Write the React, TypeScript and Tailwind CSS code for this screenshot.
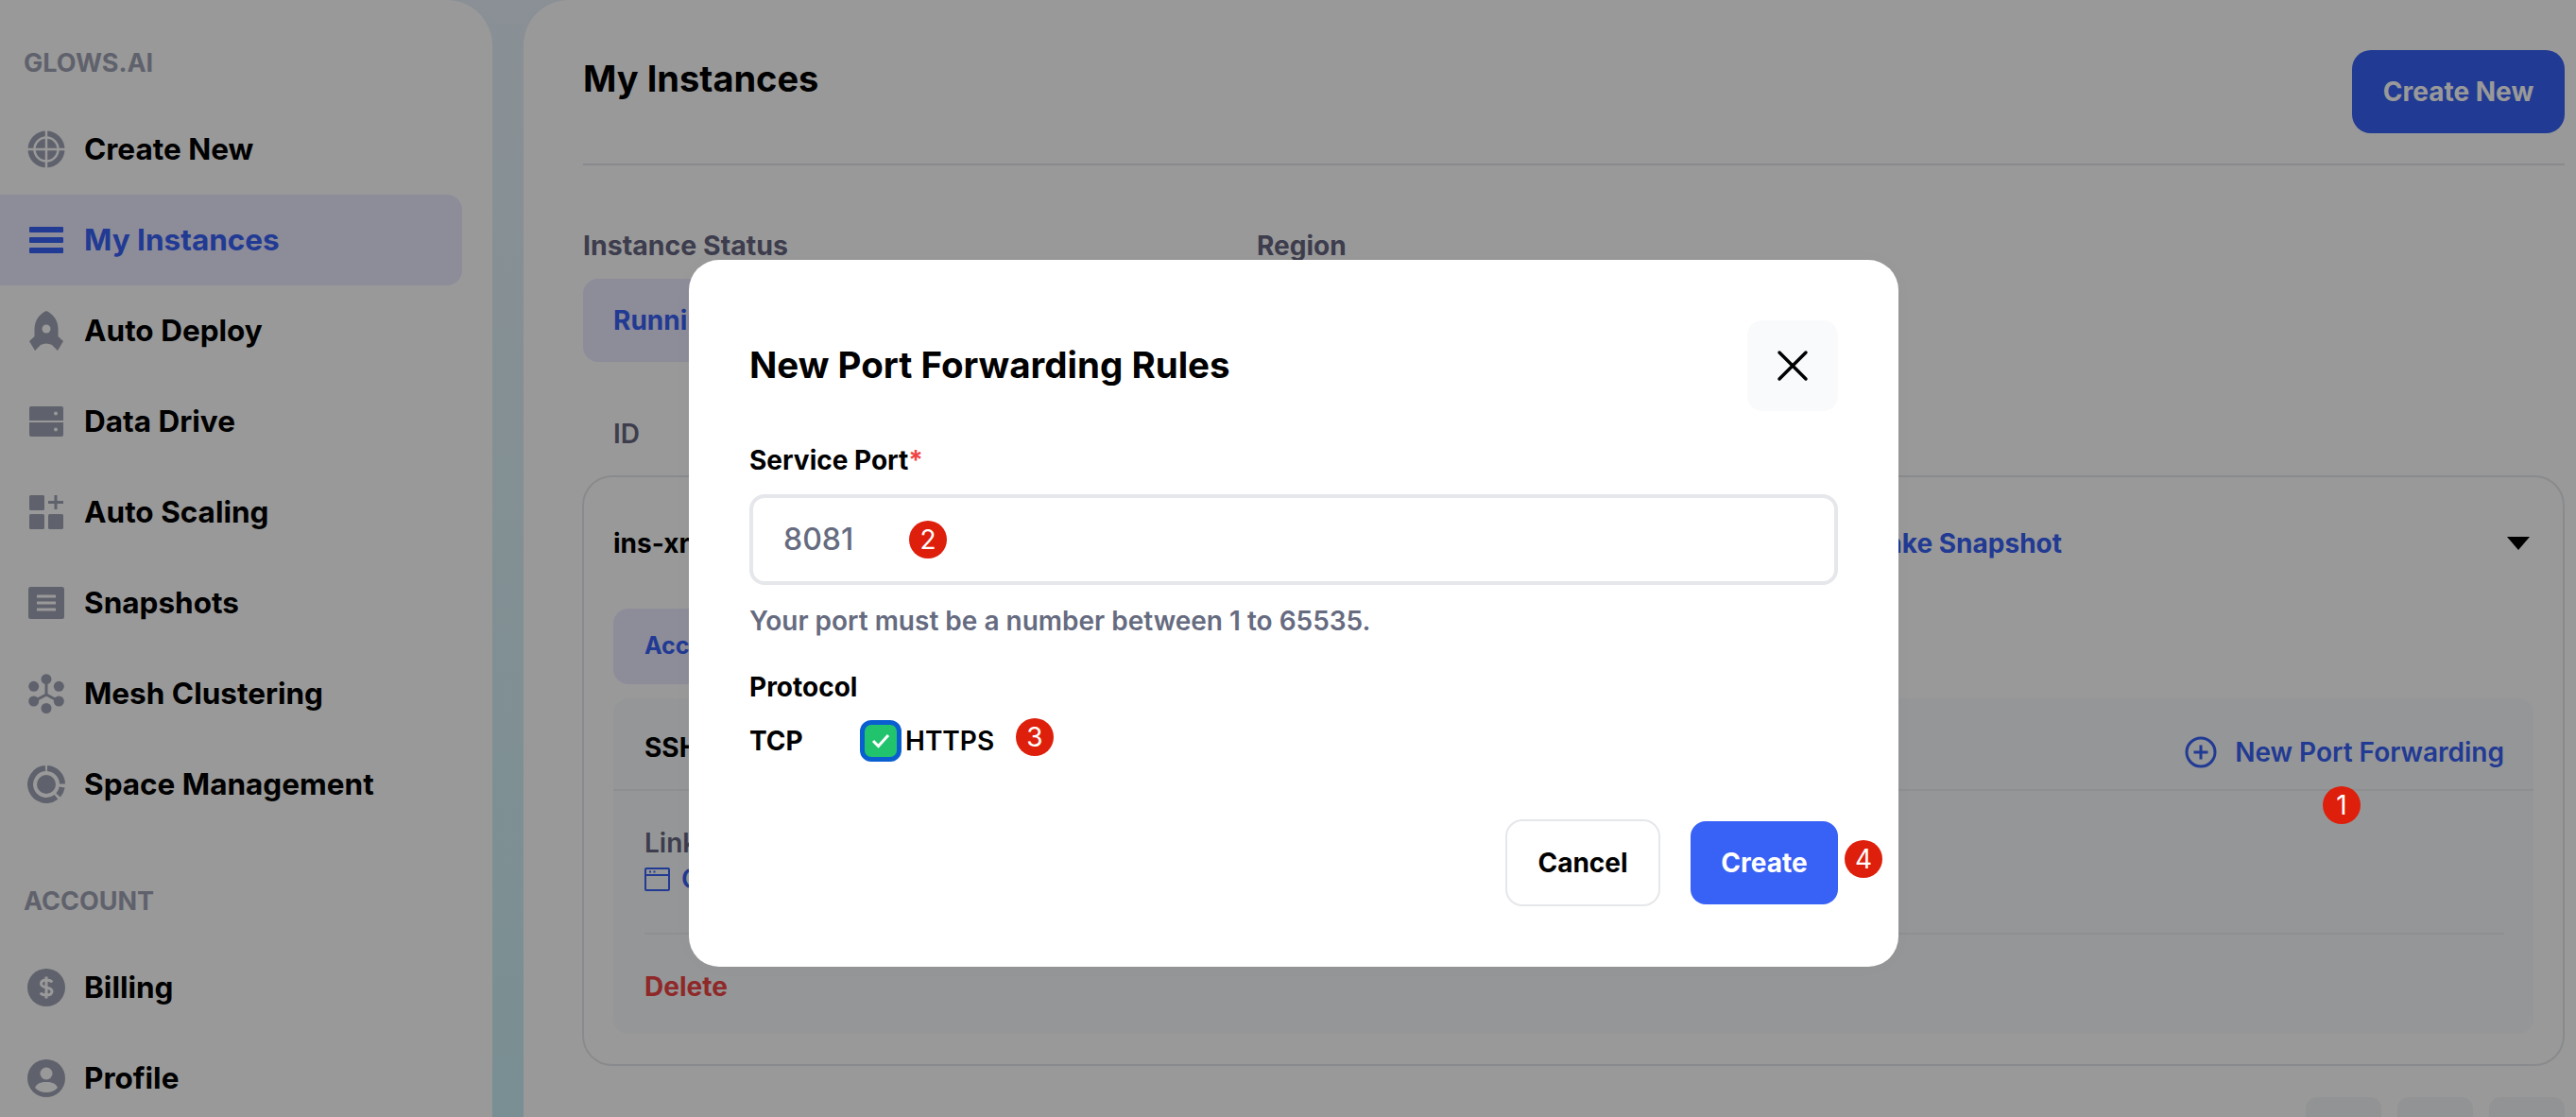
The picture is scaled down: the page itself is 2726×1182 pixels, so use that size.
import type { ReactNode } from 'react';

const ink = '#9fa3b5';

// sidebar icons
function GlobeIcon() {
  return (
    <svg viewBox="0 0 40 40" className="w-[40px] h-[40px]">
      <circle cx="20" cy="20" r="19.500" fill={ink} />
      <circle cx="20" cy="20" r="12.500" fill="none" stroke="#fff" strokeWidth="2.500" />
      <path d="M20 0V40M0 20H40" stroke="#fff" strokeWidth="2.500" />
    </svg>
  );
}

function MenuIcon() {
  return (
    <svg viewBox="0 0 36 28" className="w-[36px] h-[28px]" fill="#3861f6">
      <rect x="0" y="0" width="36" height="6" rx="1" />
      <rect x="0" y="11" width="36" height="6" rx="1" />
      <rect x="0" y="22" width="36" height="6" rx="1" />
    </svg>
  );
}

function RocketIcon() {
  return (
    <svg viewBox="0 0 36 42" className="w-[36px] h-[42px]">
      <path d="M18 0C25 3 30.500 10 30.500 19V27L36 32L30 42L24 36Q18 33 12 36L6 42L0 32L5.500 27V19C5.500 10 11 3 18 0Z" fill={ink} />
      <circle cx="18" cy="19" r="4.500" fill="#fff" />
    </svg>
  );
}

function DriveIcon() {
  return (
    <svg viewBox="0 0 36 32" className="w-[36px] h-[32px]" fill={ink}>
      <path d="M2 0H34A2 2 0 0 1 36 2V15H0V2A2 2 0 0 1 2 0Z" />
      <path d="M0 17H36V30A2 2 0 0 1 34 32H2A2 2 0 0 1 0 30Z" />
      <circle cx="28" cy="7.500" r="2" fill="#fff" />
      <circle cx="28" cy="24.500" r="2" fill="#fff" />
    </svg>
  );
}

function ScalingIcon() {
  return (
    <svg viewBox="0 0 36 36" className="w-[36px] h-[36px]" fill={ink}>
      <rect x="0" y="0" width="16" height="16" rx="1.500" />
      <rect x="0" y="20" width="16" height="16" rx="1.500" />
      <rect x="20" y="20" width="16" height="16" rx="1.500" />
      <rect x="26.500" y="0" width="3" height="15" />
      <rect x="20" y="6" width="16" height="3" />
    </svg>
  );
}

function SnapshotIcon() {
  return (
    <svg viewBox="0 0 38 34" className="w-[38px] h-[34px]">
      <rect width="38" height="34" rx="2.500" fill={ink} />
      <path d="M9 10H29M9 17H29M9 24H29" stroke="#fff" strokeWidth="3" />
    </svg>
  );
}

function MeshIcon() {
  return (
    <svg viewBox="0 0 38 42" className="w-[38px] h-[42px]" fill={ink}>
      <path d="M19 6V22L6 29M19 22L32 29" fill="none" stroke={ink} strokeWidth="3" />
      <circle cx="19" cy="5.700" r="5.500" />
      <circle cx="5.700" cy="13.300" r="5.500" />
      <circle cx="32.300" cy="13.300" r="5.500" />
      <circle cx="5.700" cy="29" r="5.500" />
      <circle cx="32.300" cy="29" r="5.500" />
      <circle cx="19" cy="36.500" r="5.500" />
    </svg>
  );
}

function SpaceIcon() {
  return (
    <svg viewBox="0 0 40 40" className="w-[40px] h-[40px]">
      <circle cx="20" cy="20" r="10" fill={ink} />
      <g fill="none" stroke={ink} strokeWidth="6">
        <path d="M19 3A17 17 0 1 0 30.500 33.400" />
        <path d="M21 3A17 17 0 0 1 37 19.500" />
        <path d="M36.700 23A17 17 0 0 1 32.600 31.400" />
      </g>
    </svg>
  );
}

function BillingIcon() {
  return (
    <svg viewBox="0 0 40 40" className="w-[40px] h-[40px]">
      <circle cx="20" cy="20" r="20" fill={ink} />
      <path d="M26 14.500C25 12.500 23 12 20 12C16.500 12 14.500 13.500 14.500 16C14.500 21.500 26 18.500 26 24C26 26.500 24 28 20 28C17 28 15 27.500 14 25.500M20 8.500V31.500" fill="none" stroke="#fff" strokeWidth="3" />
    </svg>
  );
}

function ProfileIcon() {
  return (
    <svg viewBox="0 0 40 40" className="w-[40px] h-[40px]">
      <circle cx="20" cy="20" r="20" fill={ink} />
      <circle cx="20" cy="15" r="6.500" fill="#fff" />
      <path d="M8 30C10 25.500 14 24 20 24C26 24 30 25.500 32 30C29 33.500 25 35 20 35C15 35 11 33.500 8 30Z" fill="#fff" />
    </svg>
  );
}

function NavItem({ icon, label, active }: { icon: ReactNode; label: string; active?: boolean }) {
  return (
    <div className={`flex items-center h-[96px] w-[489px] rounded-r-[16px] ${active ? 'bg-[#ece9ff] text-[#3861f6]' : 'text-black'}`}>
      <div className="ml-[9px] w-[80px] flex justify-center items-center shrink-0">{icon}</div>
      <span className="text-[31.500px] font-bold">{label}</span>
    </div>
  );
}

// numbered red markers sit on top of the dimmed page
function Badge({ n, className }: { n: string; className: string }) {
  return (
    <div className={`absolute w-[40px] h-[40px] rounded-full bg-[#de1f0c] text-white text-[28px] flex items-center justify-center ${className}`}>
      {n}
    </div>
  );
}

export default function App() {
  return (
    <div className="relative w-[2726px] h-[1182px] overflow-hidden flex bg-gradient-to-b from-[#e6f0f8] to-[#cbeff5] font-['Inter','Liberation_Sans',sans-serif]">
      {/* Sidebar */}
      <aside className="w-[521px] shrink-0 bg-white rounded-tr-[48px]">
        <div className="pl-[25px] pt-[47px] h-[110px] text-[27px] font-bold text-[#9fa3b5]">GLOWS.AI</div>
        <nav>
          <NavItem icon={<GlobeIcon />} label="Create New" />
          <NavItem icon={<MenuIcon />} label="My Instances" active />
          <NavItem icon={<RocketIcon />} label="Auto Deploy" />
          <NavItem icon={<DriveIcon />} label="Data Drive" />
          <NavItem icon={<ScalingIcon />} label="Auto Scaling" />
          <NavItem icon={<SnapshotIcon />} label="Snapshots" />
          <NavItem icon={<MeshIcon />} label="Mesh Clustering" />
          <NavItem icon={<SpaceIcon />} label="Space Management" />
        </nav>
        <div className="pl-[25px] pt-[56px] h-[119px] text-[27px] font-bold text-[#9fa3b5]">ACCOUNT</div>
        <nav>
          <NavItem icon={<BillingIcon />} label="Billing" />
          <NavItem icon={<ProfileIcon />} label="Profile" />
        </nav>
      </aside>

      {/* Main */}
      <main className="ml-[33px] flex-1 bg-white rounded-tl-[48px] pl-[63px] pr-[13px]">
        <div className="h-[175px] pt-[53px] flex justify-between items-start border-b-2 border-[#e5e7eb]">
          <h1 className="text-[38px] font-bold text-black leading-[60px]">My Instances</h1>
          <button className="w-[225px] h-[88px] rounded-[20px] bg-[#3861f6] text-white text-[28px] font-bold">Create New</button>
        </div>

        <div className="flex mt-[66px]">
          <div className="w-[713px]">
            <div className="text-[28.500px] font-bold leading-[38px] text-[#666680]">Instance Status</div>
            <div className="mt-[16px] w-[260px] h-[88px] rounded-[16px] bg-[#ece9ff] text-[#3861f6] text-[28px] font-bold flex items-center pl-[32px]">Running</div>
          </div>
          <div className="text-[28px] font-bold leading-[38px] text-[#666680]">Region</div>
        </div>

        <div className="pl-[32px] mt-[56px] h-[40px] text-[28px] font-semibold leading-[40px] text-[#666680]">ID</div>

        {/* Instance card */}
        <div className="mt-[24px] -ml-px h-[625px] border-2 border-[#e5e7eb] rounded-[32px] px-[31px]">
          <div className="h-[139px] flex items-center text-[28px] font-bold">
            <span className="text-black">ins-xr</span>
            <span className="ml-auto mr-[471px] text-[#3861f6]">Take Snapshot</span>
            <svg viewBox="0 0 24 14" className="w-[24px] h-[14px] mr-[4px]"><path d="M0 0H24L12 14Z" fill="#000" /></svg>
          </div>
          <div className="w-[200px] h-[80px] rounded-[16px] bg-[#ece9ff] text-[#3861f6] text-[25px] font-bold flex items-center pl-[33px]">Access</div>
          <div className="mt-[15px] h-[355px] w-[2032px] rounded-[16px] bg-[#f8fafc]">
            <div className="h-[98px] flex items-center justify-between pl-[33px] pr-[31px] pt-[8px] border-b-2 border-[#eceef2]">
              <span className="text-[28px] font-bold text-black">SSH</span>
              <span className="mt-[10px] flex items-center gap-[19px] text-[28px] font-semibold text-[#3861f6]">
                <svg viewBox="0 0 34 34" className="w-[34px] h-[34px]" fill="none" stroke="#3861f6" strokeWidth="3">
                  <circle cx="17" cy="17" r="15" />
                  <path d="M17 9.500V24.500M9.500 17H24.500" />
                </svg>
                New Port Forwarding
              </span>
            </div>
            <div className="mx-[33px] mr-[31px] h-[152px] border-b-2 border-[#eceef2] pt-[36px]">
              <div className="text-[28px] font-semibold text-[#666680] leading-[38px]">Link</div>
              <div className="flex items-center gap-[12px] text-[28px] font-semibold text-[#3861f6] leading-[38px]">
                <svg viewBox="0 0 27 25" className="w-[27px] h-[25px]" fill="none" stroke="#3861f6" strokeWidth="2">
                  <rect x="1" y="1" width="25" height="23" rx="1" />
                  <path d="M1 8H26M5 4.500H7M9.500 4.500H11.500" />
                </svg>
                Open
              </div>
            </div>
            <div className="pl-[33px] pt-[36px] text-[28px] font-bold text-[#ef4444] leading-[38px]">Delete</div>
          </div>
        </div>

        {/* Pagination, mostly cut off by the window */}
        <div className="mt-[33px] flex justify-end gap-[17px]">
          <div className="w-[80px] h-[80px] rounded-[12px] bg-[#f4f5f7]" />
          <div className="w-[80px] h-[80px] rounded-[12px] bg-[#f4f5f7]" />
          <div className="w-[80px] h-[80px] rounded-[12px] bg-[#f4f5f7]" />
        </div>
      </main>

      {/* Dim layer and dialog */}
      <div className="absolute inset-0 bg-black/40 flex items-start pl-[729px] pt-[275px]">
        <div className="w-[1280px] h-[748px] bg-white rounded-[32px] px-[64px] pt-[64px] shadow-[0_0_24px_rgba(0,0,0,0.02)]">
          <div className="flex items-center justify-between h-[96px]">
            <h2 className="text-[38.500px] font-bold text-black">New Port Forwarding Rules</h2>
            <button className="w-[96px] h-[96px] rounded-[16px] bg-[#f8fafc] flex items-center justify-center">
              <svg viewBox="0 0 34 34" className="w-[34px] h-[34px]" fill="none" stroke="#000" strokeWidth="3.500" strokeLinecap="round">
                <path d="M3 3L31 31M31 3L3 31" />
              </svg>
            </button>
          </div>
          <div className="mt-[32px] h-[40px] leading-[40px] text-[28px] font-bold text-black">
            Service Port<span className="text-[#ef4444]">*</span>
          </div>
          <div className="mt-[16px] h-[96px] border-4 border-[#e5e7eb] rounded-[16px] flex items-center pl-[32px] text-[32px] font-medium text-[#666b80]">8081</div>
          <div className="mt-[18px] h-[40px] leading-[40px] text-[28px] font-semibold text-[#666b80]">Your port must be a number between 1 to 65535.</div>
          <div className="mt-[30px] h-[40px] leading-[40px] text-[28px] font-bold text-black">Protocol</div>
          <div className="mt-[15px] flex items-center h-[44px]">
            <span className="w-[117px] text-[28px] font-bold text-black">TCP</span>
            <span className="w-[44px] h-[44px] rounded-[12px] border-[5px] border-[#0a5fd0] bg-[#22c36d] flex items-center justify-center">
              <svg viewBox="0 0 20 16" className="w-[20px] h-[16px]" fill="none" stroke="#fff" strokeWidth="3">
                <path d="M2 8L7.500 13.500L18 2" />
              </svg>
            </span>
            <span className="ml-[4px] text-[28px] font-semibold text-black">HTTPS</span>
          </div>
          <div className="mt-[61px] flex justify-end gap-[32px] items-center">
            <button className="w-[164px] h-[92px] rounded-[18px] border-2 border-[#e5e7eb] text-[28px] font-bold text-black">Cancel</button>
            <button className="w-[156px] h-[88px] rounded-[16px] bg-[#3861f6] text-[28px] font-bold text-white">Create</button>
          </div>
        </div>
      </div>

      <Badge n="1" className="left-[2458px] top-[832px]" />
      <Badge n="2" className="left-[962px] top-[551px]" />
      <Badge n="3" className="left-[1075px] top-[760px]" />
      <Badge n="4" className="left-[1952px] top-[889px]" />
    </div>
  );
}
